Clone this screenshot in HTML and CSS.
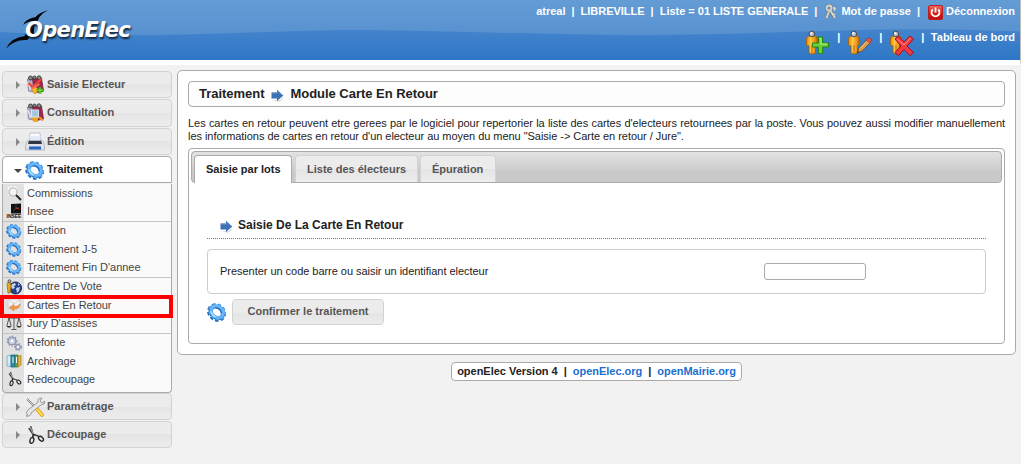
FILE: index.html
```html
<!DOCTYPE html>
<html lang="fr">
<head>
<meta charset="utf-8">
<title>openElec</title>
<link rel="stylesheet" href="styles.css">
</head>
<body>
<svg class="defs" width="0" height="0">
  <defs>
    <linearGradient id="sky" x1="0" y1="0" x2="0" y2="1"><stop offset="0" stop-color="#649cd5"/><stop offset="1" stop-color="#5891d0"/></linearGradient>
    <linearGradient id="sea" x1="0" y1="0" x2="0" y2="1"><stop offset=".5" stop-color="#4383cb"/><stop offset="1" stop-color="#2e77c6"/></linearGradient>
    <linearGradient id="orange" x1="0" y1="0" x2="1" y2="0"><stop offset="0" stop-color="#e98a05"/><stop offset=".4" stop-color="#ffc746"/><stop offset="1" stop-color="#db7600"/></linearGradient>
    <linearGradient id="red" x1="0" y1="0" x2="0" y2="1"><stop offset="0" stop-color="#ee6c64"/><stop offset=".5" stop-color="#d52621"/><stop offset="1" stop-color="#b80f10"/></linearGradient>
  </defs>
  <symbol id="gear" viewBox="0 0 20 20">
    <g transform="rotate(38 10 10)" fill="none">
      <ellipse cx="10" cy="10.800" rx="8.300" ry="6.900" stroke="#1d66ba" stroke-width="3.200" stroke-dasharray="3.200 2.100"/>
      <ellipse cx="10" cy="10.400" rx="6.600" ry="5.300" stroke="#2473cb" stroke-width="4"/>
      <ellipse cx="10" cy="9.700" rx="8.200" ry="6.700" stroke="#4da4ef" stroke-width="2.600" stroke-dasharray="3 2.200"/>
      <ellipse cx="10" cy="9.800" rx="6.500" ry="5.200" stroke="#68b6f7" stroke-width="3"/>
      <path d="M5 13q2 2.500 7 2" stroke="#b9e2ff" stroke-width="1.400"/>
      <path d="M6 7.500q4-3 8 .5" stroke="#1f6cc0" stroke-width="1.200"/>
    </g>
  </symbol>
  <symbol id="person" viewBox="0 0 25 26">
    <path d="M1.500 9Q1.500 6 4.500 6h4.500q3 0 3 2.500v6l-1.500 1v7.500q-3 1.800-6.500 0v-7l-2.500-1z" fill="url(#orange)" stroke="#a85c00" stroke-width=".8"/>
    <path d="M7 15v8" stroke="#b96a00"/>
    <circle cx="6.800" cy="4" r="2.800" fill="#b9bdc1" stroke="#4b4b4b"/><circle cx="6.300" cy="3.300" r="1" fill="#fff"/>
  </symbol>
  <symbol id="person-add" viewBox="0 0 25 26"><use href="#person" width="25" height="26"/><path d="M13.500 7h4v6h6v4h-6v6.500h-4V17h-6v-4h6z" fill="#6dd13c" stroke="#268910"/><path d="M14.500 8.500h1.500v5.500h6" fill="none" stroke="#b5f18c"/></symbol>
  <symbol id="person-edit" viewBox="0 0 25 26"><use href="#person" width="25" height="26"/><path d="M10 23l2-5 8.500-9 3.500 3-9 9z" fill="#d99b4e" stroke="#7b4a16" stroke-width=".8"/><path d="M13 18.500l7-7" stroke="#f7d39b"/><path d="M19 10l2-2q3-.5 3.500 2.500l-2 2z" fill="#e45750" stroke="#9e2b2b" stroke-width=".6"/><path d="M10 23l1-2 1 1z" fill="#222"/></symbol>
  <symbol id="person-delete" viewBox="0 0 25 26"><use href="#person" width="25" height="26"/><path d="M6 9L9.500 6l5.500 6L21 6l3.500 3-6.500 7 6.500 6.500-3.500 3-6-6-5.500 6-3.500-3 6-6.500z" fill="#f03b40" stroke="#a90e16"/><path d="M8 9l7 6 6.500-7" fill="none" stroke="#ff9290"/></symbol>
  <symbol id="key" viewBox="0 0 14 16"><g fill="none" stroke="#777" stroke-width="3"><circle cx="5" cy="4" r="2.500"/><path d="M6 6l4.500 8M5 7l-2 6"/></g><g fill="none" stroke="#d7d7d0" stroke-width="1.800"><circle cx="5" cy="4" r="2.500"/><path d="M6 6l5 8M9 11l2-1"/><path d="M9 3.500l2 1-1 2M5 7.500L2.500 14"/></g></symbol>
  <symbol id="power" viewBox="0 0 15 15"><rect x=".5" y=".5" width="14" height="14" rx="1.500" fill="url(#red)" stroke="#bf1b1b"/><path d="M4.800 4.500a4 4 0 1 0 5.400 0M7.500 2.500v5" fill="none" stroke="#fff" stroke-width="1.800"/></symbol>
  <symbol id="arrow" viewBox="0 0 13 13"><path d="M1 11h8l3-3v2l-4 3z" fill="#ddd"/><path d="M.5 3.500h5.500V.8L12.300 6.500 6 12V9.500H.5z" fill="#3e70b4"/><path d="M1 4.200h5.800V2.500L11 6" fill="none" stroke="#5b8ac6"/></symbol>
  <symbol id="ballot" viewBox="0 0 19 20"><path d="M2 4l6-1v14l-5-1z" fill="#b3adc9" stroke="#76708e" stroke-width=".7"/><path d="M7 4l9-1 2 13-9 2z" fill="#a42650" stroke="#701632" stroke-width=".7"/><g fill="#888" stroke="#303030" stroke-width=".8"><circle cx="5" cy="3" r="2"/><circle cx="9" cy="2.600" r="1.600"/><circle cx="13.500" cy="2.800" r="2"/></g><path d="M2 7q2 3 3 8" fill="none" stroke="#e4e1ef" stroke-width="1.500"/></symbol>
  <symbol id="ballot-add" viewBox="0 0 19 20"><use href="#ballot" width="19" height="20"/><path d="M6 14l4-2 4 3-5 4z" fill="#ffb829" stroke="#d77b00" stroke-width=".6"/><path d="M3 8l4 4 9-8" fill="none" stroke="#f14332" stroke-width="2.200"/><path d="M6 14l8-5" stroke="#f8765d" stroke-width="1.500"/><path d="M14.500 12v6.500M11.200 15.300H18" stroke="#298c12" stroke-width="3"/><path d="M14.500 12.500v5.500M11.700 15.300h6" stroke="#70d936" stroke-width="1.500"/></symbol>
  <symbol id="ballot-search" viewBox="0 0 19 20"><use href="#ballot" width="19" height="20"/><path d="M6 14h7l-1 5H8z" fill="#f4a321"/><path d="M6 7h7v7H6z" fill="#a4d3ea" fill-opacity=".92" stroke="#d8e9f2" stroke-width="1"/><path d="M13.500 14l4 3.500" stroke="#e29a2b" stroke-width="2.200"/></symbol>
  <symbol id="printer" viewBox="0 0 20 20"><path d="M5 1h10l1 9H4z" fill="#f8fbff" stroke="#aaaebd" stroke-width=".7"/><path d="M1.500 10l2-2h13l2 2 1 4v4H.5v-4z" fill="#dfe1e8" stroke="#a5a8b3" stroke-width=".7"/><path d="M4 8.500h12l1 3.500H3z" fill="#303644"/><path d="M4 14.500h12v3H4z" fill="#2464bf"/><path d="M4.500 4h11v4.500h-11z" fill="#e1ebf8"/></symbol>
  <symbol id="search" viewBox="0 0 16 16"><path d="M1 1h10l2 10H2z" fill="#f2f2f2" stroke="#ddd" stroke-width=".7"/><circle cx="7" cy="7" r="4" fill="#f4f4f4" stroke="#b9b9b9" stroke-width="1.200"/><path d="M10 10l5 5" stroke="#222" stroke-width="1.800"/></symbol>
  <symbol id="globe" viewBox="0 0 16 16"><circle cx="9.500" cy="9" r="6" fill="#24428f" stroke="#172855"/><path d="M6 5l3-1 1 2-2 1 1 2-3 1-1-3zM10 9l4-1-1 4-2 2zM12 4l2 2-2 .5z" fill="#c3d5ec"/><path d="M1 5q0-2 3-2l1 4-1 7H2z" fill="#e4ad18" stroke="#8f6504" stroke-width=".7"/><circle cx="3.500" cy="2.200" r="1.500" fill="#aaa" stroke="#444" stroke-width=".7"/></symbol>
  <symbol id="return-mail" viewBox="0 0 16 16"><path d="M2 2h12v9H2z" fill="#f1f1f3" stroke="#cacace" stroke-width=".8"/><path d="M2 2l6 5 6-5" fill="none" stroke="#ccc"/><path d="M14 7q0 5-6 5v2l-5-3.500 5-3v2q4 0 6-2.500z" fill="#ee9b4b" stroke="#db7625" stroke-width=".5"/></symbol>
  <symbol id="scales" viewBox="0 0 16 16"><path d="M8 1v13M3 3h10M5.500 14.500h5M3 3L.8 11M3 3l2.200 8M13 3l-2.200 8M13 3l2.200 8" fill="none" stroke="#333" stroke-width=".8"/><path d="M.3 11h5.400q-2.700 3.500-5.400 0zM10.300 11h5.400q-2.700 3.500-5.400 0z" fill="#333"/></symbol>
  <symbol id="gears" viewBox="0 0 16 16"><g fill="#bfc6de" stroke="#8a91b1" stroke-width="1"><circle cx="6" cy="6" r="4"/><circle cx="12" cy="12" r="2.500"/></g><g fill="none" stroke="#8d94b3" stroke-width="1.300" stroke-dasharray="1.500 1.640"><circle cx="6" cy="6" r="4.800"/><circle cx="12" cy="12" r="3.300"/></g><circle cx="6" cy="6" r="1.500" fill="#fff"/><circle cx="12" cy="12" r="1" fill="#fff"/></symbol>
  <symbol id="archive" viewBox="0 0 16 16"><path d="M1 3l4-1v12l-4-1z" fill="#c9e4ef" stroke="#6babc2" stroke-width=".7"/><path d="M5 2h4v12H5z" fill="#2a91b5" stroke="#155f7b" stroke-width=".7"/><path d="M9 2h3v12H9z" fill="#61a753" stroke="#30732c" stroke-width=".7"/><path d="M12 3l3-.5V12l-3 2z" fill="#dfb64e" stroke="#a77f20" stroke-width=".7"/><path d="M7 4v6M10.500 4v6M3 4v6" stroke="#eefaff"/></symbol>
  <symbol id="scissors" viewBox="0 0 16 16"><path d="M4.500 1l1.500 5 1 3M3 2.500l3.500 5L11 9" fill="none" stroke="#444" stroke-width="1.300"/><path d="M4.500 2L6.500 7" stroke="#ccc" stroke-width=".6"/><g fill="none" stroke="#252525" stroke-width="1.100"><ellipse cx="5.500" cy="12.300" rx="1.500" ry="2.400" transform="rotate(15 5.500 12.300)"/><ellipse cx="12.800" cy="11" rx="2.300" ry="1.500" transform="rotate(45 12.800 11)"/><path d="M6 10l1-3"/></g></symbol>
  <symbol id="tools" viewBox="0 0 20 20"><path d="M2 2l9 9" stroke="#777" stroke-width="1.800"/><path d="M2 2l9 9" stroke="#ddd"/><path d="M11 11l6 7" stroke="#d49a05" stroke-width="3.600" stroke-linecap="round"/><path d="M11 11l6 7" stroke="#ffdc4f" stroke-width="2.200" stroke-linecap="round"/><path d="M1 16l2-3 10-8q-1-4 4-4l-2 3 2 2 3-2q0 4-4 4L6 16q0 4-5 3l2-1z" fill="#e5e5e3" stroke="#888" stroke-width=".8"/></symbol>
</svg>

<header class="header">
  <svg class="header-bg" viewBox="0 0 1020 60" preserveAspectRatio="none"><path d="M0 0H1020V60H0z" fill="url(#sea)"/><path d="M0 0H1020V31.500C960 29 920 29 880 29.500C800 31 720 35 640 35C540 35 450 30 340 30C270 31 210 35 140 35Q60 35 0 32z" fill="url(#sky)"/></svg>
  <div class="logo">
    <svg class="bird" viewBox="0 0 46 42"><path d="M44 1Q35 3 31 8L27 9Q20 11 18 16Q25 11 33 12L35 8Q39 3 44 1zM0 41Q6 29 19 28L24 22L30 14L29 26L22 32Q9 31 0 41z" fill="#050505"/></svg>
    <span class="logo-text">OpenElec</span>
  </div>
  <div class="actions">
    <div class="links"><span>atreal</span><i>|</i><span>LIBREVILLE</span><i>|</i><span>Liste = 01 LISTE GENERALE</span><i>|</i><span class="iconlink"><svg class="key"><use href="#key"/></svg>Mot de passe</span><i>|</i><span class="iconlink"><svg class="power"><use href="#power"/></svg>Déconnexion</span></div>
    <div class="shortcuts"><svg class="person"><use href="#person-add"/></svg><i>|</i><svg class="person"><use href="#person-edit"/></svg><i>|</i><svg class="person"><use href="#person-delete"/></svg><i>|</i><span>Tableau de bord</span></div>
  </div>
</header>

<div class="layout">
  <nav class="menu">
    <div class="head"><b class="tri"></b><svg><use href="#ballot-add"/></svg>Saisie Electeur</div>
    <div class="head"><b class="tri"></b><svg><use href="#ballot-search"/></svg>Consultation</div>
    <div class="head"><b class="tri"></b><svg><use href="#printer"/></svg>Édition</div>
    <div class="head active"><b class="tri open"></b><svg><use href="#gear"/></svg>Traitement</div>
    <ul class="submenu">
      <li><svg><use href="#search"/></svg>Commissions</li>
      <li><svg viewBox="0 0 16 16"><path d="M5 1l10-.5V10.500H5z" fill="#111"/><path d="M10 1.500v4l3-1M7 8l3-3" fill="none" stroke="#555" stroke-width=".7"/><path d="M10 5l3 1" stroke="#d22"/><text class="insee-label" x=".6" y="15.200" textLength="14.800">INSEE</text></svg>Insee</li>
      <li class="split"><svg><use href="#gear"/></svg>Élection</li>
      <li><svg><use href="#gear"/></svg>Traitement J-5</li>
      <li><svg><use href="#gear"/></svg>Traitement Fin D'annee</li>
      <li class="split"><svg><use href="#globe"/></svg>Centre De Vote</li>
      <li class="current"><svg><use href="#return-mail"/></svg>Cartes En Retour</li>
      <li><svg><use href="#scales"/></svg>Jury D'assises</li>
      <li class="split"><svg><use href="#gears"/></svg>Refonte</li>
      <li><svg><use href="#archive"/></svg>Archivage</li>
      <li><svg><use href="#scissors"/></svg>Redecoupage</li>
    </ul>
    <div class="head"><b class="tri"></b><svg><use href="#tools"/></svg>Paramétrage</div>
    <div class="head"><b class="tri"></b><svg><use href="#scissors"/></svg>Découpage</div>
  </nav>

  <div class="column">
    <main class="panel">
      <h1 class="title">Traitement<svg><use href="#arrow"/></svg>Module Carte En Retour</h1>
      <p class="intro"><span class="full">Les cartes en retour peuvent etre gerees par le logiciel pour repertorier la liste des cartes d'electeurs retournees par la poste. Vous pouvez aussi modifier manuellement</span> <span class="rest">les informations de cartes en retour d'un electeur au moyen du menu "Saisie -&gt; Carte en retour / Jure".</span></p>
      <section class="tabs">
        <div class="tabbar"><span class="tab selected">Saisie par lots</span><span class="tab second">Liste des électeurs</span><span class="tab third">Épuration</span></div>
        <div class="content">
          <h2 class="subtitle"><svg><use href="#arrow"/></svg>Saisie De La Carte En Retour</h2>
          <div class="fields"><label for="code">Presenter un code barre ou saisir un identifiant electeur</label><input id="code" type="text"></div>
          <div class="submit"><svg><use href="#gear"/></svg><button type="button">Confirmer le traitement</button></div>
        </div>
      </section>
    </main>
    <footer class="footer"><span>openElec Version 4</span><i>|</i><a>openElec.org</a><i>|</i><a>openMairie.org</a></footer>
  </div>
</div>
</body>
</html>
```

FILE: styles.css
```css
*, *::after { box-sizing: border-box; }
body { margin: 0; height: 464px; overflow: hidden; background: #f2f2f2; color: #222; font: 11px/13px "Liberation Sans", Arial, sans-serif; }
svg { display: block; flex: none; }
i { font-style: normal; }
.defs { position: absolute; }
.insee-label { font: bold 5px "Liberation Sans", sans-serif; fill: #111; }

.header { position: relative; display: flex; justify-content: space-between; height: 65px; padding-right: 6px; border-right: 1px solid #bbb; border-bottom: 5px solid #fff; color: #fff; font-weight: bold; }
.header { padding-right: 5px; }
.header-bg { position: absolute; left: 0; top: 0; width: 1020px; height: 60px; }
.logo { position: relative; width: 140px; height: 60px; padding: 17px 0 0 25px; }
.bird { position: absolute; left: 6px; top: 9px; width: 44px; height: 41px; }
.logo-text { position: relative; display: block; font: italic bold 21px/26px "DejaVu Sans", sans-serif; letter-spacing: -.65px; text-shadow: 1px 2px 2px #123; white-space: nowrap; }
.actions { position: relative; display: flex; flex-direction: column; align-items: flex-end; }
.links { display: flex; align-items: center; gap: 6px; height: 22px; letter-spacing: -.01px; }
.iconlink { display: flex; align-items: center; }
.key { width: 14px; height: 16px; margin: 1px 3px -1px 1px; }
.power { width: 15px; height: 15px; margin: 1px 3px -1px 2px; }
.shortcuts { display: flex; align-items: flex-start; gap: 6.500px; padding-top: 9px; }
.shortcuts svg { width: 25px; height: 26px; margin: -1px 1px 0 0; }

.layout { display: flex; }
.menu { width: 170px; margin: 6px 5px 0 2px; }
.head { display: flex; align-items: center; height: 27px; margin-bottom: 1px; padding-left: 13px; border: 1px solid #d3d3d3; border-radius: 4px; background: linear-gradient(#ececec 0 50%, #e4e4e4 50%, #ededed); color: #555; font-weight: bold; }
.head:nth-child(2) { height: 28px; padding-bottom: 1px; }
.head svg { width: 20px; height: 20px; margin-right: 2px; }
.tri { width: 4px; height: 8px; margin-right: 5px; border: solid transparent; border-width: 4px 0 4px 4px; border-left-color: #888; }
.tri.open { width: 8px; height: 4px; margin: 2px 3px 0 -2px; border-width: 4px 4px 0; border-color: #454545 transparent; }
.head.active { background: #fff; border-color: #aaa; border-radius: 4px 4px 0 0; color: #212121; }
.submenu { margin: 0; padding: 0; height: 209px; list-style: none; border: 1px solid #aaa; border-top: 0; border-radius: 0 0 4px 4px; background: linear-gradient(90deg, #e1e1e1 21px, #fafafa 21px); color: #444; letter-spacing: -.03px; }
.submenu li { position: relative; display: flex; align-items: center; height: 18.340px; padding-left: 3px; }
.submenu li.split { height: 19.340px; border-top: 1px solid #c4c4c4; }
.submenu li svg { width: 16px; height: 16px; margin-right: 5px; }
.submenu li.current::after { content: ""; position: absolute; z-index: 2; left: -3px; top: -1px; width: 173px; height: 23px; border: 4px solid #f00; }

.column { display: flex; flex-direction: column; align-items: center; width: 839px; margin-top: 5px; }
.panel { width: 100%; height: 285px; padding: 10px; border: 1px solid #aaa; border-radius: 5px; background: #fff; }
.title { display: flex; align-items: center; height: 26px; margin: 0; padding: 0 0 1px 10px; border: 1px solid #aaa; border-radius: 4px; background: linear-gradient(#fff, #fcfcfc); font-size: 13px; line-height: 15px; letter-spacing: -.03px; }
.title svg { width: 13px; height: 13px; margin: 3px 6px 0 7px; }
.intro { margin: 10px 0 5px; letter-spacing: -.04px; white-space: nowrap; }
.intro span { display: block; }
.full { text-align: justify; text-align-last: justify; white-space: normal; word-spacing: -.1px; }
.tabs { height: 196px; padding: 2px; border: 1px solid #aaa; border-radius: 4px; background: #fff; }
.tabbar { display: flex; align-items: flex-end; height: 32px; padding-left: 2px; border: 1px solid #aaa; border-radius: 4px; background: linear-gradient(#e2e2e2, #c9c9c9 70%); }
.tab { height: 27px; padding: 7px 0 0 11px; border: 1px solid #d3d3d3; border-bottom: 0; border-radius: 4px 4px 0 0; background: linear-gradient(#ececec 0 50%, #e4e4e4 50%, #ededed); color: #555; font-weight: bold; }
.tab.selected { position: relative; width: 98px; height: 28px; margin: 0 3px -1px 0; border-color: #aaa; background: #fff; color: #212121; }
.second { width: 123px; margin-right: 2px; }
.third { width: 76px; }
.content { padding: 34px 16px 0; }
.subtitle { display: flex; align-items: center; height: 22px; margin: 0 0 10px; padding: 0 0 5px 13px; border-bottom: 1px dotted #777; font-size: 12px; }
.subtitle svg { width: 13px; height: 13px; margin: 2px 5px 0 0; }
.fields { display: flex; align-items: center; height: 45px; padding-left: 12px; border: 1px solid #ccc; border-radius: 4px; }
.fields label { width: 544px; letter-spacing: -.035px; }
.fields input { width: 102px; height: 17px; border: 1px solid #aaa; border-radius: 3px; background: #fff; }
.submit { display: flex; align-items: center; gap: 5px; margin-top: 5px; }
.submit svg { width: 20px; height: 20px; }
.submit button { width: 152px; height: 26px; padding: 0 0 2px; border: 1px solid #d3d3d3; border-radius: 4px; background: linear-gradient(#ececec 0 50%, #e5e5e5 60%, #ededed); color: #555; font: bold 11px/13px "Liberation Sans", Arial, sans-serif; }
.footer { display: flex; gap: 6px; height: 19px; margin: 7px 0 0; padding: 2px 5px; border: 1px solid #aaa; border-radius: 4px; background: #fff; font-weight: bold; letter-spacing: -.02px; }
.footer a { color: #1c70cf; }
```
